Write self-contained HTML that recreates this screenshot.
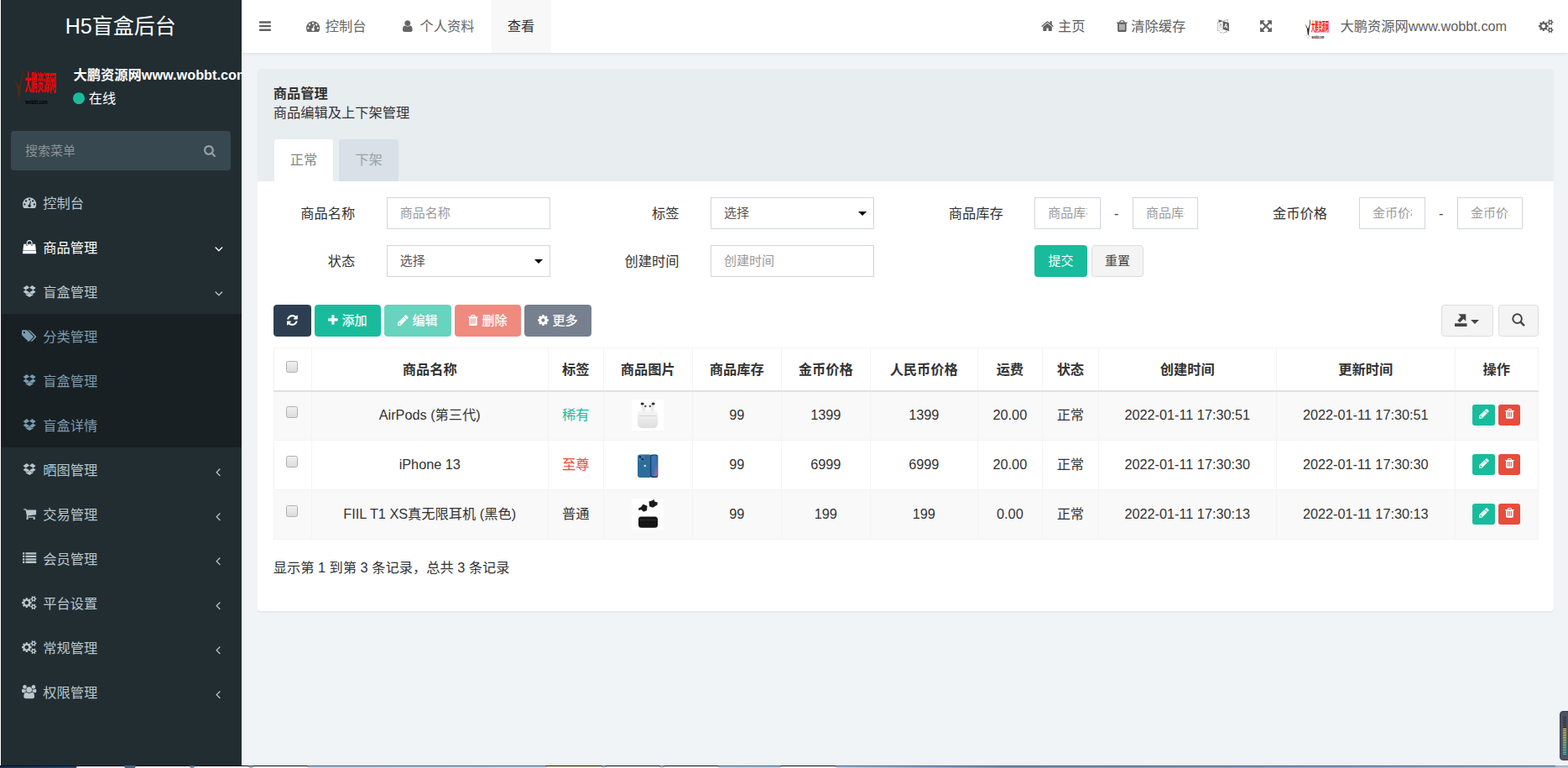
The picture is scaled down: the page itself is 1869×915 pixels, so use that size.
<!DOCTYPE html>
<html lang="zh-CN">
<head>
<meta charset="utf-8">
<title>H5盲盒后台</title>
<style>
*{box-sizing:border-box;}
html,body{margin:0;padding:0;width:1869px;height:915px;overflow:hidden;background:#f1f4f6;}
body{position:relative;font-family:"Liberation Sans","Noto Sans CJK SC",sans-serif;}
#app{position:absolute;left:0;top:0;width:1495.2px;height:732px;zoom:1.25;overflow:hidden;
  font-size:13px;line-height:1.42857;color:#333;background:#f1f4f6;}
.fa{display:inline-block;height:1em;vertical-align:-0.143em;fill:currentColor;overflow:visible;}
a{text-decoration:none;color:inherit;}
ul{list-style:none;margin:0;padding:0;}

/* sidebar */
.sidebar{position:absolute;left:0;top:0;width:230px;height:732px;background:#222d32;color:#b8c7ce;overflow:hidden;}
.logo{display:block;height:50px;line-height:50px;text-align:center;font-size:20px;color:#fff;font-weight:400;}
.user-panel{position:relative;height:65px;padding:10px;white-space:nowrap;}
.user-panel .avatar{position:absolute;left:10px;top:10px;width:45px;height:45px;}
.user-panel .info{position:absolute;left:55px;top:10px;padding:5px 5px 5px 15px;line-height:1;color:#fff;}
.user-panel .info p{margin:0 0 9px 0;font-weight:bold;font-size:13px;}
.user-panel .info .st{font-size:13px;display:block;}
.user-panel .info .st .fa{color:#18bc9c;margin-right:4.2px;margin-left:-0.7px;}
.sidebar-form{margin:10px 10px 9.7px 10px;height:37.4px;border-radius:3px;background:#374850;position:relative;}
.sidebar-form .ph{position:absolute;left:14px;top:0;line-height:38px;font-size:12px;color:#8b9398;}
.sidebar-form .fa{position:absolute;right:14.8px;top:12.2px;font-size:12px;color:#9a9fa3;}
.sidebar-menu>li{position:relative;}
.sidebar-menu li>a{display:block;height:42.4px;padding:12.4px 5px 11.6px 15px;line-height:18.4px;border-left:3px solid transparent;position:relative;white-space:nowrap;}
.sidebar-menu li>a .ico{display:inline-block;width:20px;text-align:center;position:relative;left:0.7px;top:-0.2px;}
.sidebar-menu li.active>a{color:#fff;}
.sidebar-menu .pr{position:absolute;right:19.8px;top:50%;margin-top:-6.7px;height:18px;line-height:18px;}
.sidebar-menu .pr.down .fa{transform:translate(0.3px,-0.1px) rotate(-90deg);}
.treeview-menu{background:#182024;}
.treeview-menu li>a{color:#7a9bae;}

/* header */
.navbar{position:absolute;left:230px;top:0;right:0;height:50px;background:#fff;box-shadow:0 1px 3px rgba(0,21,41,.1);color:#444;}
.navbar .toggle{position:absolute;left:0;top:0;height:50px;line-height:50px;padding:0 17px;color:#606060;}
.navtabs{position:absolute;left:44.8px;top:0;height:50px;display:flex;}
.navtabs li{height:50px;line-height:50.6px;padding:0 15px;margin-right:1px;color:#666;white-space:nowrap;}
.navtabs li.active{background:#f8f8f8;color:#333;}
.navtabs li .fw{display:inline-block;width:1.2857em;text-align:center;color:#666;}
.navtabs li.active{padding:0 15.4px;}
.navright{position:absolute;right:-0.6px;top:0;height:50px;display:flex;}
.navright li{height:50px;line-height:50.6px;padding:0 15px;color:#606060;white-space:nowrap;}
.navright li .av{display:inline-block;width:25px;height:25px;vertical-align:middle;margin-right:10px;margin-top:3.5px;}

/* content */
.content{position:absolute;left:230px;top:50px;right:0;bottom:0;padding:15.6px 0 0 15.6px;}
.panel{width:1236px;height:516.6px;background:#fff;border-radius:3px;box-shadow:0 1px 1px rgba(0,0,0,.05);}
.panel-heading{background:#e8edf0;padding:14.7px 15px 0 15px;border-radius:3px 3px 0 0;height:106.9px;}
.panel-lead{margin-bottom:15px;height:37.6px;line-height:18.4px;}
.panel-lead em{display:block;font-style:normal;font-weight:bold;}
.tabs{display:flex;height:39.7px;margin-left:1px;}
.tabs li{padding:10px 15px;margin-right:5.6px;border-radius:2.5px 2.5px 0 0;background:#d9e0e7;color:#95a5a6;height:39.7px;}
.tabs li+li{padding:10px 15.4px;}
.tabs li.active{background:#fff;color:#7b8a8b;}
.panel-body{padding:15.5px 15px 0 15px;}

/* search form */
.cs{margin:0 -15px;display:flex;flex-wrap:wrap;}
.cs .fg{width:25%;padding:0 15px;display:flex;margin-bottom:15.2px;height:30.4px;}
.cs label{width:33.3333%;padding:0 15px;text-align:right;line-height:31.4px;white-space:nowrap;}
.cs .ctl{width:66.6667%;padding:0 15px;position:relative;}
.fc{display:block;width:100%;height:30.4px;border:1px solid #d2d6de;background:#fff;font-size:12px;padding:0 12px;line-height:28.8px;color:#999;white-space:nowrap;}
.fc>span{display:block;overflow:hidden;}
.fc.sel{color:#555;position:relative;}
.fc.sel:after{content:"";position:absolute;right:6px;top:12.6px;border:4px solid transparent;border-top:4px solid #000;border-bottom:0;}
.range{display:flex;margin:0 -15px;position:relative;}
.range>div{width:50%;padding:0 15px;}
.range .dash{position:absolute;left:0;width:100%;text-align:center;line-height:31px;padding:0;color:#444;}
.btn{display:inline-block;height:30.4px;line-height:28.6px;padding:0 12px;font-size:12px;border:1px solid transparent;border-radius:3px;white-space:nowrap;vertical-align:top;}
.btn-success{background:#18bc9c;border-color:#18bc9c;color:#fff;}
.btn-default{background:#f4f4f4;border-color:#ddd;color:#444;}
.btn-primary{background:#2c3e50;border-color:#2c3e50;color:#fff;}
.btn-danger{background:#e74c3c;border-color:#e74c3c;color:#fff;}
.btn-secondary{background:#76808e;border-color:#76808e;color:#fff;}
.btn.dis{opacity:.65;}

/* toolbar */
.toolbar{position:relative;height:30.4px;margin-top:11.2px;margin-bottom:10.3px;}
.toolbar .l{position:absolute;left:0;top:0;display:flex;gap:3.4px;}
.toolbar .l .fa{margin-right:0.6px;}
.toolbar .l .btn-primary .fa{margin-right:0;}
.cs .btn{padding:0 12.3px;}
.toolbar .r{position:absolute;right:-0.6px;top:0;display:flex;gap:5.1px;}
.toolbar .r .btn{position:relative;padding:0;}
.toolbar .r .exp{width:49.2px;}
.toolbar .r .exp svg{position:absolute;left:11.7px;top:7.6px;width:11.6px;height:12.4px;fill:#444;}
.toolbar .r .exp i{position:absolute;left:27.2px;top:13.3px;border:4px solid transparent;border-top:4.2px solid #444;border-bottom:0;}
.toolbar .r .sr{width:38.2px;}
.toolbar .r .sr svg{position:absolute;left:11.9px;top:7.5px;width:12.6px;height:12.4px;fill:none;stroke:#444;}

/* table */
table{border-collapse:collapse;width:1205.6px;table-layout:fixed;}
th,td{border:1px solid #f4f4f4;text-align:center;vertical-align:middle;padding:0 8px;white-space:nowrap;overflow:hidden;}
th{height:41.2px;font-weight:bold;border-bottom:1.6px solid #e0e0e0;padding-top:1px;}
td{height:47.2px;padding-bottom:1.6px;}
tbody tr:nth-child(odd){background:#f9f9f9;}
.cb{display:inline-block;width:11px;height:11px;position:relative;top:-3.5px;left:-0.6px;border:1px solid #b0b0b0;border-radius:2px;background:linear-gradient(#f0f0f0,#dcdcdc);vertical-align:middle;}
.op{display:inline-block;height:20px;padding:0 6px;border-radius:2.4px;color:#fff;font-size:11px;line-height:19px;text-align:center;vertical-align:middle;margin:0 -0.05px;}
.pimg{display:inline-block;width:30.4px;height:29.6px;vertical-align:middle;position:relative;left:-0.3px;}
.tinfo{margin-top:9.2px;line-height:34px;}

/* desktop leftovers */
#edge{position:absolute;left:0;top:0;width:2px;height:912px;background:linear-gradient(90deg,#fff 0,#fff 1px,#1a2328 1px,#1a2328 2px);}
#taskbar{position:absolute;left:0;top:912px;width:1869px;height:3px;background:linear-gradient(90deg,#17305c 0,#1d4a78 91px,#b4d0f2 367px,#bcd6f6 650px,#a9c8ee 1000px,#6e95c6 1200px,#7fa4d2 1500px,#9dbce2 1854px,#b9c6d8 1855px);overflow:hidden;}
#taskbar:before{content:"";position:absolute;left:0;top:0;width:100%;height:1px;background:linear-gradient(90deg,#070d16 0,#070d16 91px,#46566a 91px,#46566a 1854px,#8ea3bf 1854px);}
#taskbar i{position:absolute;top:0;height:3px;background:#f6f8fc;border-radius:2px 2px 0 0;border-top:1px solid #0a0a0c;}
#tbline{position:absolute;left:288px;top:911px;width:1581px;height:1px;background:#fff;}
#widget{position:absolute;left:1859px;top:847px;width:14px;height:59px;border-radius:4px;background:#4d5361;border:1px solid #3b404c;}
#widget:before{content:"";position:absolute;left:3px;top:5px;width:4px;height:46px;background:linear-gradient(#2e3139 0,#2e3139 14px,#f0c040 14px,#e8c840 20px,#c8d850 26px,#80dc70 34px,#40d8a0 40px,#30d0c0 46px);}
#widget:after{content:"";position:absolute;left:3px;top:5px;width:4px;height:46px;background:repeating-linear-gradient(#4d5361 0,#4d5361 1px,transparent 1px,transparent 2px);}
.toolbar .l .btn{-webkit-text-stroke:0.2px currentColor;}
.range>div:last-child .fc{margin-left:0.45px;width:calc(100% - 0.45px);}
.cs .fg:nth-child(4) .range{left:0.5px;}

</style>
</head>
<body>
<div id="app">
  <div class="sidebar">
    <a class="logo">H5盲盒后台</a>
    <div class="user-panel">
      <svg class="avatar" viewBox="0 0 45 45"><path d="M9.6 5.8c1.6 1 2.4 2.6 2 4.6c-.2 2.6-1 5.6-1.6 8.6c-.3 2.6-.7 5.4-.9 8.200c-.2 2.600-.5 5.200-1.4 6.800c-.8-1.400-1-3.600-1.200-6c-.2-3.200-.8-6-1.800-8.600c-.8-2.200-1.800-4-2.800-5.600c1.600 1.200 2.800 2.800 3.800 4.800c.6 1.400 1.200 2.800 1.800 3.800c.8-2.200 1.600-4.600 2.200-7.200c.5-2.400.9-4.800.9-6.600c0-1.200-.4-2.200-1-2.800z M4.600 32.500l.8 1.200l-.8 1z M9.400 33.600l.8 1.400l-1 .8z M7 36l.8 1.400l-.9.6z" fill="#4f2a14"/><text transform="translate(13.1,26.3) scale(0.3,1.06)" font-size="20" font-weight="bold" fill="#ff0000">大鹏资源网</text><text transform="translate(13.8,39) scale(0.62,1)" font-size="6.5" font-weight="bold" fill="#000">wobbt.com</text></svg>
      <div class="info">
        <p>大鹏资源网www.wobbt.com</p>
        <span class="st"><svg class="fa " viewBox="0 0 1536 1792" style="width:0.8571em;"><path transform="translate(0,1536) scale(1,-1)" d="M1536 640q0 -209 -103 -385.5t-279.5 -279.5t-385.5 -103t-385.5 103t-279.5 279.5t-103 385.5t103 385.5t279.5 279.5t385.5 103t385.5 -103t279.5 -279.5t103 -385.5z"/></svg>在线</span>
      </div>
    </div>
    <div class="sidebar-form"><span class="ph">搜索菜单</span><svg class="fa " viewBox="0 0 1664 1792" style="width:0.9286em;"><path transform="translate(0,1536) scale(1,-1)" d="M1152 704q0 185 -131.5 316.5t-316.5 131.5t-316.5 -131.5t-131.5 -316.5t131.5 -316.5t316.5 -131.5t316.5 131.5t131.5 316.5zM1664 -128q0 -52 -38 -90t-90 -38q-54 0 -90 38l-343 342q-179 -124 -399 -124q-143 0 -273.5 55.5t-225 150t-150 225t-55.5 273.5
t55.5 273.5t150 225t225 150t273.5 55.5t273.5 -55.5t225 -150t150 -225t55.5 -273.5q0 -220 -124 -399l343 -343q37 -37 37 -90z"/></svg></div>
    <ul class="sidebar-menu">
      <li><a><span class="ico"><svg class="fa " viewBox="0 0 1792 1792" style="width:1.0000em;"><path transform="translate(0,1536) scale(1,-1)" d="M384 384q0 53 -37.5 90.5t-90.5 37.5t-90.5 -37.5t-37.5 -90.5t37.5 -90.5t90.5 -37.5t90.5 37.5t37.5 90.5zM576 832q0 53 -37.5 90.5t-90.5 37.5t-90.5 -37.5t-37.5 -90.5t37.5 -90.5t90.5 -37.5t90.5 37.5t37.5 90.5zM1004 351l101 382q6 26 -7.5 48.5t-38.5 29.5
t-48 -6.5t-30 -39.5l-101 -382q-60 -5 -107 -43.5t-63 -98.5q-20 -77 20 -146t117 -89t146 20t89 117q16 60 -6 117t-72 91zM1664 384q0 53 -37.5 90.5t-90.5 37.5t-90.5 -37.5t-37.5 -90.5t37.5 -90.5t90.5 -37.5t90.5 37.5t37.5 90.5zM1024 1024q0 53 -37.5 90.5
t-90.5 37.5t-90.5 -37.5t-37.5 -90.5t37.5 -90.5t90.5 -37.5t90.5 37.5t37.5 90.5zM1472 832q0 53 -37.5 90.5t-90.5 37.5t-90.5 -37.5t-37.5 -90.5t37.5 -90.5t90.5 -37.5t90.5 37.5t37.5 90.5zM1792 384q0 -261 -141 -483q-19 -29 -54 -29h-1402q-35 0 -54 29
q-141 221 -141 483q0 182 71 348t191 286t286 191t348 71t348 -71t286 -191t191 -286t71 -348z"/></svg></span> <span>控制台</span></a></li>
      <li class="active"><a><span class="ico"><svg class="fa " viewBox="0 0 1792 1792" style="width:1.0000em;"><path transform="translate(0,1536) scale(1,-1)" d="M1757 128l35 -313q3 -28 -16 -50q-19 -21 -48 -21h-1664q-29 0 -48 21q-19 22 -16 50l35 313h1722zM1664 967l86 -775h-1708l86 775q3 24 21 40.5t43 16.5h256v-128q0 -53 37.5 -90.5t90.5 -37.5t90.5 37.5t37.5 90.5v128h384v-128q0 -53 37.5 -90.5t90.5 -37.5
t90.5 37.5t37.5 90.5v128h256q25 0 43 -16.5t21 -40.5zM1280 1152v-256q0 -26 -19 -45t-45 -19t-45 19t-19 45v256q0 106 -75 181t-181 75t-181 -75t-75 -181v-256q0 -26 -19 -45t-45 -19t-45 19t-19 45v256q0 159 112.5 271.5t271.5 112.5t271.5 -112.5t112.5 -271.5z"/></svg></span> <span>商品管理</span><span class="pr down"><svg class="fa " viewBox="0 0 640 1792" style="width:0.3571em;"><path transform="translate(0,1536) scale(1,-1)" d="M627 992q0 -13 -10 -23l-393 -393l393 -393q10 -10 10 -23t-10 -23l-50 -50q-10 -10 -23 -10t-23 10l-466 466q-10 10 -10 23t10 23l466 466q10 10 23 10t23 -10l50 -50q10 -10 10 -23z"/></svg></span></a></li>
      <li class="open"><a><span class="ico"><svg class="fa " viewBox="0 0 1792 1792" style="width:1.0000em;"><path transform="translate(0,1536) scale(1,-1)" d="M402 829l494 -305l-342 -285l-490 319zM1388 274v-108l-490 -293v-1l-1 1l-1 -1v1l-489 293v108l147 -96l342 284v2l1 -1l1 1v-2l343 -284zM554 1418l342 -285l-494 -304l-338 270zM1390 829l338 -271l-489 -319l-343 285zM1239 1418l489 -319l-338 -270l-494 304z"/></svg></span> <span>盲盒管理</span><span class="pr down"><svg class="fa " viewBox="0 0 640 1792" style="width:0.3571em;"><path transform="translate(0,1536) scale(1,-1)" d="M627 992q0 -13 -10 -23l-393 -393l393 -393q10 -10 10 -23t-10 -23l-50 -50q-10 -10 -23 -10t-23 10l-466 466q-10 10 -10 23t10 23l466 466q10 10 23 10t23 -10l50 -50q10 -10 10 -23z"/></svg></span></a>
        <ul class="treeview-menu">
          <li><a><span class="ico"><svg class="fa " viewBox="0 0 1920 1792" style="width:1.0714em;"><path transform="translate(0,1536) scale(1,-1)" d="M448 1088q0 53 -37.5 90.5t-90.5 37.5t-90.5 -37.5t-37.5 -90.5t37.5 -90.5t90.5 -37.5t90.5 37.5t37.5 90.5zM1515 512q0 -53 -37 -90l-491 -492q-39 -37 -91 -37q-53 0 -90 37l-715 716q-38 37 -64.5 101t-26.5 117v416q0 52 38 90t90 38h416q53 0 117 -26.5t102 -64.5
l715 -714q37 -39 37 -91zM1899 512q0 -53 -37 -90l-491 -492q-39 -37 -91 -37q-36 0 -59 14t-53 45l470 470q37 37 37 90q0 52 -37 91l-715 714q-38 38 -102 64.5t-117 26.5h224q53 0 117 -26.5t102 -64.5l715 -714q37 -39 37 -91z"/></svg></span> <span>分类管理</span></a></li>
          <li><a><span class="ico"><svg class="fa " viewBox="0 0 1792 1792" style="width:1.0000em;"><path transform="translate(0,1536) scale(1,-1)" d="M402 829l494 -305l-342 -285l-490 319zM1388 274v-108l-490 -293v-1l-1 1l-1 -1v1l-489 293v108l147 -96l342 284v2l1 -1l1 1v-2l343 -284zM554 1418l342 -285l-494 -304l-338 270zM1390 829l338 -271l-489 -319l-343 285zM1239 1418l489 -319l-338 -270l-494 304z"/></svg></span> <span>盲盒管理</span></a></li>
          <li><a><span class="ico"><svg class="fa " viewBox="0 0 1792 1792" style="width:1.0000em;"><path transform="translate(0,1536) scale(1,-1)" d="M402 829l494 -305l-342 -285l-490 319zM1388 274v-108l-490 -293v-1l-1 1l-1 -1v1l-489 293v108l147 -96l342 284v2l1 -1l1 1v-2l343 -284zM554 1418l342 -285l-494 -304l-338 270zM1390 829l338 -271l-489 -319l-343 285zM1239 1418l489 -319l-338 -270l-494 304z"/></svg></span> <span>盲盒详情</span></a></li>
        </ul>
      </li>
      <li><a><span class="ico"><svg class="fa " viewBox="0 0 1792 1792" style="width:1.0000em;"><path transform="translate(0,1536) scale(1,-1)" d="M402 829l494 -305l-342 -285l-490 319zM1388 274v-108l-490 -293v-1l-1 1l-1 -1v1l-489 293v108l147 -96l342 284v2l1 -1l1 1v-2l343 -284zM554 1418l342 -285l-494 -304l-338 270zM1390 829l338 -271l-489 -319l-343 285zM1239 1418l489 -319l-338 -270l-494 304z"/></svg></span> <span>晒图管理</span><span class="pr"><svg class="fa " viewBox="0 0 640 1792" style="width:0.3571em;"><path transform="translate(0,1536) scale(1,-1)" d="M627 992q0 -13 -10 -23l-393 -393l393 -393q10 -10 10 -23t-10 -23l-50 -50q-10 -10 -23 -10t-23 10l-466 466q-10 10 -10 23t10 23l466 466q10 10 23 10t23 -10l50 -50q10 -10 10 -23z"/></svg></span></a></li>
      <li><a><span class="ico"><svg class="fa " viewBox="0 0 1664 1792" style="width:0.9286em;"><path transform="translate(0,1536) scale(1,-1)" d="M640 0q0 -52 -38 -90t-90 -38t-90 38t-38 90t38 90t90 38t90 -38t38 -90zM1536 0q0 -52 -38 -90t-90 -38t-90 38t-38 90t38 90t90 38t90 -38t38 -90zM1664 1088v-512q0 -24 -16.5 -42.5t-40.5 -21.5l-1044 -122q13 -60 13 -70q0 -16 -24 -64h920q26 0 45 -19t19 -45
t-19 -45t-45 -19h-1024q-26 0 -45 19t-19 45q0 11 8 31.5t16 36t21.5 40t15.5 29.5l-177 823h-204q-26 0 -45 19t-19 45t19 45t45 19h256q16 0 28.5 -6.5t19.5 -15.5t13 -24.5t8 -26t5.5 -29.5t4.5 -26h1201q26 0 45 -19t19 -45z"/></svg></span> <span>交易管理</span><span class="pr"><svg class="fa " viewBox="0 0 640 1792" style="width:0.3571em;"><path transform="translate(0,1536) scale(1,-1)" d="M627 992q0 -13 -10 -23l-393 -393l393 -393q10 -10 10 -23t-10 -23l-50 -50q-10 -10 -23 -10t-23 10l-466 466q-10 10 -10 23t10 23l466 466q10 10 23 10t23 -10l50 -50q10 -10 10 -23z"/></svg></span></a></li>
      <li><a><span class="ico"><svg class="fa " viewBox="0 0 1792 1792" style="width:1.0000em;"><path transform="translate(0,1536) scale(1,-1)" d="M256 224v-192q0 -13 -9.5 -22.5t-22.5 -9.5h-192q-13 0 -22.5 9.5t-9.5 22.5v192q0 13 9.5 22.5t22.5 9.5h192q13 0 22.5 -9.5t9.5 -22.5zM256 608v-192q0 -13 -9.5 -22.5t-22.5 -9.5h-192q-13 0 -22.5 9.5t-9.5 22.5v192q0 13 9.5 22.5t22.5 9.5h192q13 0 22.5 -9.5
t9.5 -22.5zM256 992v-192q0 -13 -9.5 -22.5t-22.5 -9.5h-192q-13 0 -22.5 9.5t-9.5 22.5v192q0 13 9.5 22.5t22.5 9.5h192q13 0 22.5 -9.5t9.5 -22.5zM1792 224v-192q0 -13 -9.5 -22.5t-22.5 -9.5h-1344q-13 0 -22.5 9.5t-9.5 22.5v192q0 13 9.5 22.5t22.5 9.5h1344
q13 0 22.5 -9.5t9.5 -22.5zM256 1376v-192q0 -13 -9.5 -22.5t-22.5 -9.5h-192q-13 0 -22.5 9.5t-9.5 22.5v192q0 13 9.5 22.5t22.5 9.5h192q13 0 22.5 -9.5t9.5 -22.5zM1792 608v-192q0 -13 -9.5 -22.5t-22.5 -9.5h-1344q-13 0 -22.5 9.5t-9.5 22.5v192q0 13 9.5 22.5
t22.5 9.5h1344q13 0 22.5 -9.5t9.5 -22.5zM1792 992v-192q0 -13 -9.5 -22.5t-22.5 -9.5h-1344q-13 0 -22.5 9.5t-9.5 22.5v192q0 13 9.5 22.5t22.5 9.5h1344q13 0 22.5 -9.5t9.5 -22.5zM1792 1376v-192q0 -13 -9.5 -22.5t-22.5 -9.5h-1344q-13 0 -22.5 9.5t-9.5 22.5v192
q0 13 9.5 22.5t22.5 9.5h1344q13 0 22.5 -9.5t9.5 -22.5z"/></svg></span> <span>会员管理</span><span class="pr"><svg class="fa " viewBox="0 0 640 1792" style="width:0.3571em;"><path transform="translate(0,1536) scale(1,-1)" d="M627 992q0 -13 -10 -23l-393 -393l393 -393q10 -10 10 -23t-10 -23l-50 -50q-10 -10 -23 -10t-23 10l-466 466q-10 10 -10 23t10 23l466 466q10 10 23 10t23 -10l50 -50q10 -10 10 -23z"/></svg></span></a></li>
      <li><a><span class="ico"><svg class="fa " viewBox="0 0 1920 1792" style="width:1.0714em;"><path transform="translate(0,1536) scale(1,-1)" d="M896 640q0 106 -75 181t-181 75t-181 -75t-75 -181t75 -181t181 -75t181 75t75 181zM1664 128q0 52 -38 90t-90 38t-90 -38t-38 -90q0 -53 37.5 -90.5t90.5 -37.5t90.5 37.5t37.5 90.5zM1664 1152q0 52 -38 90t-90 38t-90 -38t-38 -90q0 -53 37.5 -90.5t90.5 -37.5
t90.5 37.5t37.5 90.5zM1280 731v-185q0 -10 -7 -19.5t-16 -10.5l-155 -24q-11 -35 -32 -76q34 -48 90 -115q7 -11 7 -20q0 -12 -7 -19q-23 -30 -82.5 -89.5t-78.5 -59.5q-11 0 -21 7l-115 90q-37 -19 -77 -31q-11 -108 -23 -155q-7 -24 -30 -24h-186q-11 0 -20 7.5t-10 17.5
l-23 153q-34 10 -75 31l-118 -89q-7 -7 -20 -7q-11 0 -21 8q-144 133 -144 160q0 9 7 19q10 14 41 53t47 61q-23 44 -35 82l-152 24q-10 1 -17 9.5t-7 19.5v185q0 10 7 19.5t16 10.5l155 24q11 35 32 76q-34 48 -90 115q-7 11 -7 20q0 12 7 20q22 30 82 89t79 59q11 0 21 -7
l115 -90q34 18 77 32q11 108 23 154q7 24 30 24h186q11 0 20 -7.5t10 -17.5l23 -153q34 -10 75 -31l118 89q8 7 20 7q11 0 21 -8q144 -133 144 -160q0 -8 -7 -19q-12 -16 -42 -54t-45 -60q23 -48 34 -82l152 -23q10 -2 17 -10.5t7 -19.5zM1920 198v-140q0 -16 -149 -31
q-12 -27 -30 -52q51 -113 51 -138q0 -4 -4 -7q-122 -71 -124 -71q-8 0 -46 47t-52 68q-20 -2 -30 -2t-30 2q-14 -21 -52 -68t-46 -47q-2 0 -124 71q-4 3 -4 7q0 25 51 138q-18 25 -30 52q-149 15 -149 31v140q0 16 149 31q13 29 30 52q-51 113 -51 138q0 4 4 7q4 2 35 20
t59 34t30 16q8 0 46 -46.5t52 -67.5q20 2 30 2t30 -2q51 71 92 112l6 2q4 0 124 -70q4 -3 4 -7q0 -25 -51 -138q17 -23 30 -52q149 -15 149 -31zM1920 1222v-140q0 -16 -149 -31q-12 -27 -30 -52q51 -113 51 -138q0 -4 -4 -7q-122 -71 -124 -71q-8 0 -46 47t-52 68
q-20 -2 -30 -2t-30 2q-14 -21 -52 -68t-46 -47q-2 0 -124 71q-4 3 -4 7q0 25 51 138q-18 25 -30 52q-149 15 -149 31v140q0 16 149 31q13 29 30 52q-51 113 -51 138q0 4 4 7q4 2 35 20t59 34t30 16q8 0 46 -46.5t52 -67.5q20 2 30 2t30 -2q51 71 92 112l6 2q4 0 124 -70
q4 -3 4 -7q0 -25 -51 -138q17 -23 30 -52q149 -15 149 -31z"/></svg></span> <span>平台设置</span><span class="pr"><svg class="fa " viewBox="0 0 640 1792" style="width:0.3571em;"><path transform="translate(0,1536) scale(1,-1)" d="M627 992q0 -13 -10 -23l-393 -393l393 -393q10 -10 10 -23t-10 -23l-50 -50q-10 -10 -23 -10t-23 10l-466 466q-10 10 -10 23t10 23l466 466q10 10 23 10t23 -10l50 -50q10 -10 10 -23z"/></svg></span></a></li>
      <li><a><span class="ico"><svg class="fa " viewBox="0 0 1920 1792" style="width:1.0714em;"><path transform="translate(0,1536) scale(1,-1)" d="M896 640q0 106 -75 181t-181 75t-181 -75t-75 -181t75 -181t181 -75t181 75t75 181zM1664 128q0 52 -38 90t-90 38t-90 -38t-38 -90q0 -53 37.5 -90.5t90.5 -37.5t90.5 37.5t37.5 90.5zM1664 1152q0 52 -38 90t-90 38t-90 -38t-38 -90q0 -53 37.5 -90.5t90.5 -37.5
t90.5 37.5t37.5 90.5zM1280 731v-185q0 -10 -7 -19.5t-16 -10.5l-155 -24q-11 -35 -32 -76q34 -48 90 -115q7 -11 7 -20q0 -12 -7 -19q-23 -30 -82.5 -89.5t-78.5 -59.5q-11 0 -21 7l-115 90q-37 -19 -77 -31q-11 -108 -23 -155q-7 -24 -30 -24h-186q-11 0 -20 7.5t-10 17.5
l-23 153q-34 10 -75 31l-118 -89q-7 -7 -20 -7q-11 0 -21 8q-144 133 -144 160q0 9 7 19q10 14 41 53t47 61q-23 44 -35 82l-152 24q-10 1 -17 9.5t-7 19.5v185q0 10 7 19.5t16 10.5l155 24q11 35 32 76q-34 48 -90 115q-7 11 -7 20q0 12 7 20q22 30 82 89t79 59q11 0 21 -7
l115 -90q34 18 77 32q11 108 23 154q7 24 30 24h186q11 0 20 -7.5t10 -17.5l23 -153q34 -10 75 -31l118 89q8 7 20 7q11 0 21 -8q144 -133 144 -160q0 -8 -7 -19q-12 -16 -42 -54t-45 -60q23 -48 34 -82l152 -23q10 -2 17 -10.5t7 -19.5zM1920 198v-140q0 -16 -149 -31
q-12 -27 -30 -52q51 -113 51 -138q0 -4 -4 -7q-122 -71 -124 -71q-8 0 -46 47t-52 68q-20 -2 -30 -2t-30 2q-14 -21 -52 -68t-46 -47q-2 0 -124 71q-4 3 -4 7q0 25 51 138q-18 25 -30 52q-149 15 -149 31v140q0 16 149 31q13 29 30 52q-51 113 -51 138q0 4 4 7q4 2 35 20
t59 34t30 16q8 0 46 -46.5t52 -67.5q20 2 30 2t30 -2q51 71 92 112l6 2q4 0 124 -70q4 -3 4 -7q0 -25 -51 -138q17 -23 30 -52q149 -15 149 -31zM1920 1222v-140q0 -16 -149 -31q-12 -27 -30 -52q51 -113 51 -138q0 -4 -4 -7q-122 -71 -124 -71q-8 0 -46 47t-52 68
q-20 -2 -30 -2t-30 2q-14 -21 -52 -68t-46 -47q-2 0 -124 71q-4 3 -4 7q0 25 51 138q-18 25 -30 52q-149 15 -149 31v140q0 16 149 31q13 29 30 52q-51 113 -51 138q0 4 4 7q4 2 35 20t59 34t30 16q8 0 46 -46.5t52 -67.5q20 2 30 2t30 -2q51 71 92 112l6 2q4 0 124 -70
q4 -3 4 -7q0 -25 -51 -138q17 -23 30 -52q149 -15 149 -31z"/></svg></span> <span>常规管理</span><span class="pr"><svg class="fa " viewBox="0 0 640 1792" style="width:0.3571em;"><path transform="translate(0,1536) scale(1,-1)" d="M627 992q0 -13 -10 -23l-393 -393l393 -393q10 -10 10 -23t-10 -23l-50 -50q-10 -10 -23 -10t-23 10l-466 466q-10 10 -10 23t10 23l466 466q10 10 23 10t23 -10l50 -50q10 -10 10 -23z"/></svg></span></a></li>
      <li><a><span class="ico"><svg class="fa " viewBox="0 0 1920 1792" style="width:1.0714em;"><path transform="translate(0,1536) scale(1,-1)" d="M593 640q-162 -5 -265 -128h-134q-82 0 -138 40.5t-56 118.5q0 353 124 353q6 0 43.5 -21t97.5 -42.5t119 -21.5q67 0 133 23q-5 -37 -5 -66q0 -139 81 -256zM1664 3q0 -120 -73 -189.5t-194 -69.5h-874q-121 0 -194 69.5t-73 189.5q0 53 3.5 103.5t14 109t26.5 108.5
t43 97.5t62 81t85.5 53.5t111.5 20q10 0 43 -21.5t73 -48t107 -48t135 -21.5t135 21.5t107 48t73 48t43 21.5q61 0 111.5 -20t85.5 -53.5t62 -81t43 -97.5t26.5 -108.5t14 -109t3.5 -103.5zM640 1280q0 -106 -75 -181t-181 -75t-181 75t-75 181t75 181t181 75t181 -75
t75 -181zM1344 896q0 -159 -112.5 -271.5t-271.5 -112.5t-271.5 112.5t-112.5 271.5t112.5 271.5t271.5 112.5t271.5 -112.5t112.5 -271.5zM1920 671q0 -78 -56 -118.5t-138 -40.5h-134q-103 123 -265 128q81 117 81 256q0 29 -5 66q66 -23 133 -23q59 0 119 21.5t97.5 42.5
t43.5 21q124 0 124 -353zM1792 1280q0 -106 -75 -181t-181 -75t-181 75t-75 181t75 181t181 75t181 -75t75 -181z"/></svg></span> <span>权限管理</span><span class="pr"><svg class="fa " viewBox="0 0 640 1792" style="width:0.3571em;"><path transform="translate(0,1536) scale(1,-1)" d="M627 992q0 -13 -10 -23l-393 -393l393 -393q10 -10 10 -23t-10 -23l-50 -50q-10 -10 -23 -10t-23 10l-466 466q-10 10 -10 23t10 23l466 466q10 10 23 10t23 -10l50 -50q10 -10 10 -23z"/></svg></span></a></li>
    </ul>
  </div>

  <div class="navbar">
    <a class="toggle"><svg class="fa " viewBox="0 0 1536 1792" style="width:0.8571em;"><path transform="translate(0,1536) scale(1,-1)" d="M1536 192v-128q0 -26 -19 -45t-45 -19h-1408q-26 0 -45 19t-19 45v128q0 26 19 45t45 19h1408q26 0 45 -19t19 -45zM1536 704v-128q0 -26 -19 -45t-45 -19h-1408q-26 0 -45 19t-19 45v128q0 26 19 45t45 19h1408q26 0 45 -19t19 -45zM1536 1216v-128q0 -26 -19 -45
t-45 -19h-1408q-26 0 -45 19t-19 45v128q0 26 19 45t45 19h1408q26 0 45 -19t19 -45z"/></svg></a>
    <ul class="navtabs">
      <li><span class="fw"><svg class="fa " viewBox="0 0 1792 1792" style="width:1.0000em;"><path transform="translate(0,1536) scale(1,-1)" d="M384 384q0 53 -37.5 90.5t-90.5 37.5t-90.5 -37.5t-37.5 -90.5t37.5 -90.5t90.5 -37.5t90.5 37.5t37.5 90.5zM576 832q0 53 -37.5 90.5t-90.5 37.5t-90.5 -37.5t-37.5 -90.5t37.5 -90.5t90.5 -37.5t90.5 37.5t37.5 90.5zM1004 351l101 382q6 26 -7.5 48.5t-38.5 29.5
t-48 -6.5t-30 -39.5l-101 -382q-60 -5 -107 -43.5t-63 -98.5q-20 -77 20 -146t117 -89t146 20t89 117q16 60 -6 117t-72 91zM1664 384q0 53 -37.5 90.5t-90.5 37.5t-90.5 -37.5t-37.5 -90.5t37.5 -90.5t90.5 -37.5t90.5 37.5t37.5 90.5zM1024 1024q0 53 -37.5 90.5
t-90.5 37.5t-90.5 -37.5t-37.5 -90.5t37.5 -90.5t90.5 -37.5t90.5 37.5t37.5 90.5zM1472 832q0 53 -37.5 90.5t-90.5 37.5t-90.5 -37.5t-37.5 -90.5t37.5 -90.5t90.5 -37.5t90.5 37.5t37.5 90.5zM1792 384q0 -261 -141 -483q-19 -29 -54 -29h-1402q-35 0 -54 29
q-141 221 -141 483q0 182 71 348t191 286t286 191t348 71t348 -71t286 -191t191 -286t71 -348z"/></svg></span> <span>控制台</span></li>
      <li><span class="fw"><svg class="fa " viewBox="0 0 1280 1792" style="width:0.7143em;"><path transform="translate(0,1536) scale(1,-1)" d="M1280 137q0 -109 -62.5 -187t-150.5 -78h-854q-88 0 -150.5 78t-62.5 187q0 85 8.5 160.5t31.5 152t58.5 131t94 89t134.5 34.5q131 -128 313 -128t313 128q76 0 134.5 -34.5t94 -89t58.5 -131t31.5 -152t8.5 -160.5zM1024 1024q0 -159 -112.5 -271.5t-271.5 -112.5
t-271.5 112.5t-112.5 271.5t112.5 271.5t271.5 112.5t271.5 -112.5t112.5 -271.5z"/></svg></span> <span>个人资料</span></li>
      <li class="active"><span>查看</span></li>
    </ul>
    <ul class="navright">
      <li><svg class="fa " viewBox="0 0 1664 1792" style="width:0.9286em;"><path transform="translate(0,1536) scale(1,-1)" d="M1408 544v-480q0 -26 -19 -45t-45 -19h-384v384h-256v-384h-384q-26 0 -45 19t-19 45v480q0 1 0.5 3t0.5 3l575 474l575 -474q1 -2 1 -6zM1631 613l-62 -74q-8 -9 -21 -11h-3q-13 0 -21 7l-692 577l-692 -577q-12 -8 -24 -7q-13 2 -21 11l-62 74q-8 10 -7 23.5t11 21.5
l719 599q32 26 76 26t76 -26l244 -204v195q0 14 9 23t23 9h192q14 0 23 -9t9 -23v-408l219 -182q10 -8 11 -21.5t-7 -23.5z"/></svg> 主页</li>
      <li><svg class="fa " viewBox="0 0 1408 1792" style="width:0.7857em;"><path transform="translate(0,1536) scale(1,-1)" d="M512 160v704q0 14 -9 23t-23 9h-64q-14 0 -23 -9t-9 -23v-704q0 -14 9 -23t23 -9h64q14 0 23 9t9 23zM768 160v704q0 14 -9 23t-23 9h-64q-14 0 -23 -9t-9 -23v-704q0 -14 9 -23t23 -9h64q14 0 23 9t9 23zM1024 160v704q0 14 -9 23t-23 9h-64q-14 0 -23 -9t-9 -23v-704
q0 -14 9 -23t23 -9h64q14 0 23 9t9 23zM480 1152h448l-48 117q-7 9 -17 11h-317q-10 -2 -17 -11zM1408 1120v-64q0 -14 -9 -23t-23 -9h-96v-948q0 -83 -47 -143.5t-113 -60.5h-832q-66 0 -113 58.5t-47 141.5v952h-96q-14 0 -23 9t-9 23v64q0 14 9 23t23 9h309l70 167
q15 37 54 63t79 26h320q40 0 79 -26t54 -63l70 -167h309q14 0 23 -9t9 -23z"/></svg> 清除缓存</li>
      <li><svg class="fa " viewBox="0 0 1536 1792" style="width:0.8571em;"><path transform="translate(0,1536) scale(1,-1)" d="M654 458q-1 -3 -12.5 0.5t-31.5 11.5l-20 9q-44 20 -87 49q-7 5 -41 31.5t-38 28.5q-67 -103 -134 -181q-81 -95 -105 -110q-4 -2 -19.5 -4t-18.5 0q6 4 82 92q21 24 85.5 115t78.5 118q17 30 51 98.5t36 77.5q-8 1 -110 -33q-8 -2 -27.5 -7.5t-34.5 -9.5t-17 -5
q-2 -2 -2 -10.5t-1 -9.5q-5 -10 -31 -15q-23 -7 -47 0q-18 4 -28 21q-4 6 -5 23q6 2 24.5 5t29.5 6q58 16 105 32q100 35 102 35q10 2 43 19.5t44 21.5q9 3 21.5 8t14.5 5.5t6 -0.5q2 -12 -1 -33q0 -2 -12.5 -27t-26.5 -53.5t-17 -33.5q-25 -50 -77 -131l64 -28
q12 -6 74.5 -32t67.5 -28q4 -1 10.5 -25.5t4.5 -30.5zM449 944q3 -15 -4 -28q-12 -23 -50 -38q-30 -12 -60 -12q-26 3 -49 26q-14 15 -18 41l1 3q3 -3 19.5 -5t26.5 0t58 16q36 12 55 14q17 0 21 -17zM1147 815l63 -227l-139 42zM39 15l694 232v1032l-694 -233v-1031z
M1280 332l102 -31l-181 657l-100 31l-216 -536l102 -31l45 110l211 -65zM777 1294l573 -184v380zM1088 -29l158 -13l-54 -160l-40 66q-130 -83 -276 -108q-58 -12 -91 -12h-84q-79 0 -199.5 39t-183.5 85q-8 7 -8 16q0 8 5 13.5t13 5.5q4 0 18 -7.5t30.5 -16.5t20.5 -11
q73 -37 159.5 -61.5t157.5 -24.5q95 0 167 14.5t157 50.5q15 7 30.5 15.5t34 19t28.5 16.5zM1536 1050v-1079l-774 246q-14 -6 -375 -127.5t-368 -121.5q-13 0 -18 13q0 1 -1 3v1078q3 9 4 10q5 6 20 11q107 36 149 50v384l558 -198q2 0 160.5 55t316 108.5t161.5 53.5
q20 0 20 -21v-418z"/></svg></li>
      <li><svg class="fa " viewBox="0 0 1536 1792" style="width:0.8571em;"><path transform="translate(0,1536) scale(1,-1)" d="M1283 995l-355 -355l355 -355l144 144q29 31 70 14q39 -17 39 -59v-448q0 -26 -19 -45t-45 -19h-448q-42 0 -59 40q-17 39 14 69l144 144l-355 355l-355 -355l144 -144q31 -30 14 -69q-17 -40 -59 -40h-448q-26 0 -45 19t-19 45v448q0 42 40 59q39 17 69 -14l144 -144
l355 355l-355 355l-144 -144q-19 -19 -45 -19q-12 0 -24 5q-40 17 -40 59v448q0 26 19 45t45 19h448q42 0 59 -40q17 -39 -14 -69l-144 -144l355 -355l355 355l-144 144q-31 30 -14 69q17 40 59 40h448q26 0 45 -19t19 -45v-448q0 -42 -39 -59q-13 -5 -25 -5q-26 0 -45 19z
"/></svg></li>
      <li><svg class="av" viewBox="0 0 45 45"><rect width="45" height="45" fill="#fff"/><path d="M9.6 5.8c1.6 1 2.4 2.6 2 4.6c-.2 2.6-1 5.6-1.6 8.6c-.3 2.6-.7 5.4-.9 8.200c-.2 2.600-.5 5.200-1.4 6.800c-.8-1.400-1-3.600-1.200-6c-.2-3.200-.8-6-1.800-8.600c-.8-2.200-1.800-4-2.800-5.600c1.600 1.200 2.800 2.800 3.800 4.800c.6 1.400 1.200 2.800 1.800 3.800c.8-2.200 1.600-4.600 2.200-7.200c.5-2.400.9-4.800.9-6.600c0-1.200-.4-2.200-1-2.800z M4.600 32.500l.8 1.200l-.8 1z M9.400 33.600l.8 1.400l-1 .8z M7 36l.8 1.400l-.9.6z" fill="#2a1a10"/><text transform="translate(13.1,26.3) scale(0.3,1.06)" font-size="20" font-weight="bold" fill="#ff0000">大鹏资源网</text><text transform="translate(13.8,39) scale(0.62,1)" font-size="6.5" font-weight="bold" fill="#000">wobbt.com</text></svg><span>大鹏资源网www.wobbt.com</span></li>
      <li><svg class="fa " viewBox="0 0 1920 1792" style="width:1.0714em;"><path transform="translate(0,1536) scale(1,-1)" d="M896 640q0 106 -75 181t-181 75t-181 -75t-75 -181t75 -181t181 -75t181 75t75 181zM1664 128q0 52 -38 90t-90 38t-90 -38t-38 -90q0 -53 37.5 -90.5t90.5 -37.5t90.5 37.5t37.5 90.5zM1664 1152q0 52 -38 90t-90 38t-90 -38t-38 -90q0 -53 37.5 -90.5t90.5 -37.5
t90.5 37.5t37.5 90.5zM1280 731v-185q0 -10 -7 -19.5t-16 -10.5l-155 -24q-11 -35 -32 -76q34 -48 90 -115q7 -11 7 -20q0 -12 -7 -19q-23 -30 -82.5 -89.5t-78.5 -59.5q-11 0 -21 7l-115 90q-37 -19 -77 -31q-11 -108 -23 -155q-7 -24 -30 -24h-186q-11 0 -20 7.5t-10 17.5
l-23 153q-34 10 -75 31l-118 -89q-7 -7 -20 -7q-11 0 -21 8q-144 133 -144 160q0 9 7 19q10 14 41 53t47 61q-23 44 -35 82l-152 24q-10 1 -17 9.5t-7 19.5v185q0 10 7 19.5t16 10.5l155 24q11 35 32 76q-34 48 -90 115q-7 11 -7 20q0 12 7 20q22 30 82 89t79 59q11 0 21 -7
l115 -90q34 18 77 32q11 108 23 154q7 24 30 24h186q11 0 20 -7.5t10 -17.5l23 -153q34 -10 75 -31l118 89q8 7 20 7q11 0 21 -8q144 -133 144 -160q0 -8 -7 -19q-12 -16 -42 -54t-45 -60q23 -48 34 -82l152 -23q10 -2 17 -10.5t7 -19.5zM1920 198v-140q0 -16 -149 -31
q-12 -27 -30 -52q51 -113 51 -138q0 -4 -4 -7q-122 -71 -124 -71q-8 0 -46 47t-52 68q-20 -2 -30 -2t-30 2q-14 -21 -52 -68t-46 -47q-2 0 -124 71q-4 3 -4 7q0 25 51 138q-18 25 -30 52q-149 15 -149 31v140q0 16 149 31q13 29 30 52q-51 113 -51 138q0 4 4 7q4 2 35 20
t59 34t30 16q8 0 46 -46.5t52 -67.5q20 2 30 2t30 -2q51 71 92 112l6 2q4 0 124 -70q4 -3 4 -7q0 -25 -51 -138q17 -23 30 -52q149 -15 149 -31zM1920 1222v-140q0 -16 -149 -31q-12 -27 -30 -52q51 -113 51 -138q0 -4 -4 -7q-122 -71 -124 -71q-8 0 -46 47t-52 68
q-20 -2 -30 -2t-30 2q-14 -21 -52 -68t-46 -47q-2 0 -124 71q-4 3 -4 7q0 25 51 138q-18 25 -30 52q-149 15 -149 31v140q0 16 149 31q13 29 30 52q-51 113 -51 138q0 4 4 7q4 2 35 20t59 34t30 16q8 0 46 -46.5t52 -67.5q20 2 30 2t30 -2q51 71 92 112l6 2q4 0 124 -70
q4 -3 4 -7q0 -25 -51 -138q17 -23 30 -52q149 -15 149 -31z"/></svg></li>
    </ul>
  </div>

  <div class="content">
    <div class="panel">
      <div class="panel-heading">
        <div class="panel-lead"><em>商品管理</em>商品编辑及上下架管理</div>
        <ul class="tabs">
          <li class="active">正常</li>
          <li>下架</li>
        </ul>
      </div>
      <div class="panel-body">
        <div class="cs">
          <div class="fg"><label>商品名称</label><div class="ctl"><div class="fc"><span>商品名称</span></div></div></div>
          <div class="fg"><label>标签</label><div class="ctl"><div class="fc sel">选择</div></div></div>
          <div class="fg"><label>商品库存</label><div class="ctl"><div class="range"><div><div class="fc"><span>商品库存</span></div></div><div class="dash">-</div><div><div class="fc"><span>商品库存</span></div></div></div></div></div>
          <div class="fg"><label>金币价格</label><div class="ctl"><div class="range"><div><div class="fc"><span>金币价格</span></div></div><div class="dash">-</div><div><div class="fc"><span>金币价格</span></div></div></div></div></div>
          <div class="fg"><label>状态</label><div class="ctl"><div class="fc sel">选择</div></div></div>
          <div class="fg"><label>创建时间</label><div class="ctl"><div class="fc"><span>创建时间</span></div></div></div>
          <div class="fg"><label></label><div class="ctl"><span class="btn btn-success">提交</span> <span class="btn btn-default">重置</span></div></div>
        </div>
        <div class="toolbar">
          <div class="l">
            <span class="btn btn-primary"><svg class="fa " viewBox="0 0 1536 1792" style="width:0.8571em;"><path transform="translate(0,1536) scale(1,-1)" d="M1511 480q0 -5 -1 -7q-64 -268 -268 -434.5t-478 -166.5q-146 0 -282.5 55t-243.5 157l-129 -129q-19 -19 -45 -19t-45 19t-19 45v448q0 26 19 45t45 19h448q26 0 45 -19t19 -45t-19 -45l-137 -137q71 -66 161 -102t187 -36q134 0 250 65t186 179q11 17 53 117
q8 23 30 23h192q13 0 22.5 -9.5t9.5 -22.5zM1536 1280v-448q0 -26 -19 -45t-45 -19h-448q-26 0 -45 19t-19 45t19 45l138 138q-148 137 -349 137q-134 0 -250 -65t-186 -179q-11 -17 -53 -117q-8 -23 -30 -23h-199q-13 0 -22.5 9.5t-9.5 22.5v7q65 268 270 434.5t480 166.5
q146 0 284 -55.5t245 -156.5l130 129q19 19 45 19t45 -19t19 -45z"/></svg></span>
            <span class="btn btn-success"><svg class="fa " viewBox="0 0 1408 1792" style="width:0.7857em;"><path transform="translate(0,1536) scale(1,-1)" d="M1408 800v-192q0 -40 -28 -68t-68 -28h-416v-416q0 -40 -28 -68t-68 -28h-192q-40 0 -68 28t-28 68v416h-416q-40 0 -68 28t-28 68v192q0 40 28 68t68 28h416v416q0 40 28 68t68 28h192q40 0 68 -28t28 -68v-416h416q40 0 68 -28t28 -68z"/></svg> 添加</span>
            <span class="btn btn-success dis"><svg class="fa " viewBox="0 0 1536 1792" style="width:0.8571em;"><path transform="translate(0,1536) scale(1,-1)" d="M363 0l91 91l-235 235l-91 -91v-107h128v-128h107zM886 928q0 22 -22 22q-10 0 -17 -7l-542 -542q-7 -7 -7 -17q0 -22 22 -22q10 0 17 7l542 542q7 7 7 17zM832 1120l416 -416l-832 -832h-416v416zM1515 1024q0 -53 -37 -90l-166 -166l-416 416l166 165q36 38 90 38
q53 0 91 -38l235 -234q37 -39 37 -91z"/></svg> 编辑</span>
            <span class="btn btn-danger dis"><svg class="fa " viewBox="0 0 1408 1792" style="width:0.7857em;"><path transform="translate(0,1536) scale(1,-1)" d="M512 160v704q0 14 -9 23t-23 9h-64q-14 0 -23 -9t-9 -23v-704q0 -14 9 -23t23 -9h64q14 0 23 9t9 23zM768 160v704q0 14 -9 23t-23 9h-64q-14 0 -23 -9t-9 -23v-704q0 -14 9 -23t23 -9h64q14 0 23 9t9 23zM1024 160v704q0 14 -9 23t-23 9h-64q-14 0 -23 -9t-9 -23v-704
q0 -14 9 -23t23 -9h64q14 0 23 9t9 23zM480 1152h448l-48 117q-7 9 -17 11h-317q-10 -2 -17 -11zM1408 1120v-64q0 -14 -9 -23t-23 -9h-96v-948q0 -83 -47 -143.5t-113 -60.5h-832q-66 0 -113 58.5t-47 141.5v952h-96q-14 0 -23 9t-9 23v64q0 14 9 23t23 9h309l70 167
q15 37 54 63t79 26h320q40 0 79 -26t54 -63l70 -167h309q14 0 23 -9t9 -23z"/></svg> 删除</span>
            <span class="btn btn-secondary"><svg class="fa " viewBox="0 0 1536 1792" style="width:0.8571em;"><path transform="translate(0,1536) scale(1,-1)" d="M1024 640q0 106 -75 181t-181 75t-181 -75t-75 -181t75 -181t181 -75t181 75t75 181zM1536 749v-222q0 -12 -8 -23t-20 -13l-185 -28q-19 -54 -39 -91q35 -50 107 -138q10 -12 10 -25t-9 -23q-27 -37 -99 -108t-94 -71q-12 0 -26 9l-138 108q-44 -23 -91 -38
q-16 -136 -29 -186q-7 -28 -36 -28h-222q-14 0 -24.5 8.5t-11.5 21.5l-28 184q-49 16 -90 37l-141 -107q-10 -9 -25 -9q-14 0 -25 11q-126 114 -165 168q-7 10 -7 23q0 12 8 23q15 21 51 66.5t54 70.5q-27 50 -41 99l-183 27q-13 2 -21 12.5t-8 23.5v222q0 12 8 23t19 13
l186 28q14 46 39 92q-40 57 -107 138q-10 12 -10 24q0 10 9 23q26 36 98.5 107.5t94.5 71.5q13 0 26 -10l138 -107q44 23 91 38q16 136 29 186q7 28 36 28h222q14 0 24.5 -8.5t11.5 -21.5l28 -184q49 -16 90 -37l142 107q9 9 24 9q13 0 25 -10q129 -119 165 -170q7 -8 7 -22
q0 -12 -8 -23q-15 -21 -51 -66.5t-54 -70.5q26 -50 41 -98l183 -28q13 -2 21 -12.5t8 -23.5z"/></svg> 更多</span>
          </div>
          <div class="r">
            <span class="btn btn-default exp"><svg viewBox="0 0 14.4 15.4"><path d="M0 11.3H14.4V15.4H0z M4.3 0.3H13.2V8.6L10.4 5.9L6 10.3L3.3 7.6L7.4 3.4z"/></svg><i></i></span>
            <span class="btn btn-default sr"><svg viewBox="0 0 15.8 15.4"><circle cx="6.6" cy="6.6" r="5.3" stroke-width="2"/><path d="M10.3 10.3L15 15" stroke-width="2.5" stroke-linecap="butt"/></svg></span>
          </div>
        </div>
        <table>
          <colgroup><col style="width:36px"><col style="width:225.6px"><col style="width:52.8px"><col style="width:84.8px"><col style="width:84.8px"><col style="width:84.8px"><col style="width:102.4px"><col style="width:61.8px"><col style="width:53.4px"><col style="width:169.6px"><col style="width:170.4px"><col style="width:79.2px"></colgroup>
          <thead><tr><th><i class="cb"></i></th><th>商品名称</th><th>标签</th><th>商品图片</th><th>商品库存</th><th>金币价格</th><th>人民币价格</th><th>运费</th><th>状态</th><th>创建时间</th><th>更新时间</th><th>操作</th></tr></thead>
          <tbody>
            <tr><td><i class="cb"></i></td><td>AirPods (第三代)</td><td style="color:#18bc9c">稀有</td><td><svg class="pimg" viewBox="0 0 38 37"><defs><linearGradient id="g1" x1="0" y1="0" x2="0" y2="1"><stop offset="0" stop-color="#f6f6f6"/><stop offset="1" stop-color="#dedede"/></linearGradient></defs><rect width="38" height="37" fill="#fff"/><rect x="7.2" y="12.5" width="23.8" height="21.5" rx="5" fill="url(#g1)"/><path d="M8.5 19.5h21" stroke="#d2d2d2" stroke-width="0.8"/><path d="M12 4.5l4.5 2.5l-1 7l-3 .5z" fill="#e9e9e9"/><path d="M26.5 4.5l-4.5 2.5l1 7l3 .5z" fill="#e9e9e9"/><ellipse cx="12.6" cy="5" rx="2" ry="1.6" fill="#2a2a2a"/><ellipse cx="25.6" cy="5" rx="2" ry="1.6" fill="#2a2a2a"/><circle cx="16.3" cy="8" r="1.2" fill="#555"/><circle cx="21.8" cy="8" r="1.2" fill="#555"/></svg></td><td>99</td><td>1399</td><td>1399</td><td>20.00</td><td>正常</td><td>2022-01-11 17:30:51</td><td>2022-01-11 17:30:51</td><td><span class="op" style="background:#18bc9c"><svg class="fa " viewBox="0 0 1536 1792" style="width:0.8571em;"><path transform="translate(0,1536) scale(1,-1)" d="M363 0l91 91l-235 235l-91 -91v-107h128v-128h107zM886 928q0 22 -22 22q-10 0 -17 -7l-542 -542q-7 -7 -7 -17q0 -22 22 -22q10 0 17 7l542 542q7 7 7 17zM832 1120l416 -416l-832 -832h-416v416zM1515 1024q0 -53 -37 -90l-166 -166l-416 416l166 165q36 38 90 38
q53 0 91 -38l235 -234q37 -39 37 -91z"/></svg></span> <span class="op" style="background:#e74c3c"><svg class="fa " viewBox="0 0 1408 1792" style="width:0.7857em;"><path transform="translate(0,1536) scale(1,-1)" d="M512 160v704q0 14 -9 23t-23 9h-64q-14 0 -23 -9t-9 -23v-704q0 -14 9 -23t23 -9h64q14 0 23 9t9 23zM768 160v704q0 14 -9 23t-23 9h-64q-14 0 -23 -9t-9 -23v-704q0 -14 9 -23t23 -9h64q14 0 23 9t9 23zM1024 160v704q0 14 -9 23t-23 9h-64q-14 0 -23 -9t-9 -23v-704
q0 -14 9 -23t23 -9h64q14 0 23 9t9 23zM480 1152h448l-48 117q-7 9 -17 11h-317q-10 -2 -17 -11zM1408 1120v-64q0 -14 -9 -23t-23 -9h-96v-948q0 -83 -47 -143.5t-113 -60.5h-832q-66 0 -113 58.5t-47 141.5v952h-96q-14 0 -23 9t-9 23v64q0 14 9 23t23 9h309l70 167
q15 37 54 63t79 26h320q40 0 79 -26t54 -63l70 -167h309q14 0 23 -9t9 -23z"/></svg></span></td></tr>
            <tr><td><i class="cb"></i></td><td>iPhone 13</td><td style="color:#e74c3c">至尊</td><td><svg class="pimg" viewBox="0 0 38 37"><defs><linearGradient id="g2" x1="0" y1="0" x2="1" y2="1"><stop offset="0" stop-color="#2f7cc0"/><stop offset="0.55" stop-color="#3a6fb0"/><stop offset="1" stop-color="#c06aa8"/></linearGradient></defs><rect x="7" y="6.5" width="17" height="27.4" rx="3" fill="#2d6d9c"/><rect x="22.3" y="6.5" width="9" height="27.4" rx="2.5" fill="#16304e"/><rect x="23.3" y="7.6" width="7.4" height="25.2" rx="2" fill="url(#g2)"/><rect x="8" y="7.5" width="6.8" height="6.8" rx="2" fill="#3f82b4"/><circle cx="10" cy="9.4" r="1.4" fill="#14263a"/><circle cx="12.8" cy="12.2" r="1.4" fill="#14263a"/><circle cx="15.8" cy="20" r="1.3" fill="#cfdde8"/></svg></td><td>99</td><td>6999</td><td>6999</td><td>20.00</td><td>正常</td><td>2022-01-11 17:30:30</td><td>2022-01-11 17:30:30</td><td><span class="op" style="background:#18bc9c"><svg class="fa " viewBox="0 0 1536 1792" style="width:0.8571em;"><path transform="translate(0,1536) scale(1,-1)" d="M363 0l91 91l-235 235l-91 -91v-107h128v-128h107zM886 928q0 22 -22 22q-10 0 -17 -7l-542 -542q-7 -7 -7 -17q0 -22 22 -22q10 0 17 7l542 542q7 7 7 17zM832 1120l416 -416l-832 -832h-416v416zM1515 1024q0 -53 -37 -90l-166 -166l-416 416l166 165q36 38 90 38
q53 0 91 -38l235 -234q37 -39 37 -91z"/></svg></span> <span class="op" style="background:#e74c3c"><svg class="fa " viewBox="0 0 1408 1792" style="width:0.7857em;"><path transform="translate(0,1536) scale(1,-1)" d="M512 160v704q0 14 -9 23t-23 9h-64q-14 0 -23 -9t-9 -23v-704q0 -14 9 -23t23 -9h64q14 0 23 9t9 23zM768 160v704q0 14 -9 23t-23 9h-64q-14 0 -23 -9t-9 -23v-704q0 -14 9 -23t23 -9h64q14 0 23 9t9 23zM1024 160v704q0 14 -9 23t-23 9h-64q-14 0 -23 -9t-9 -23v-704
q0 -14 9 -23t23 -9h64q14 0 23 9t9 23zM480 1152h448l-48 117q-7 9 -17 11h-317q-10 -2 -17 -11zM1408 1120v-64q0 -14 -9 -23t-23 -9h-96v-948q0 -83 -47 -143.5t-113 -60.5h-832q-66 0 -113 58.5t-47 141.5v952h-96q-14 0 -23 9t-9 23v64q0 14 9 23t23 9h309l70 167
q15 37 54 63t79 26h320q40 0 79 -26t54 -63l70 -167h309q14 0 23 -9t9 -23z"/></svg></span></td></tr>
            <tr><td><i class="cb"></i></td><td>FIIL T1 XS真无限耳机 (黑色)</td><td>普通</td><td><svg class="pimg" viewBox="0 0 38 37"><rect width="38" height="37" fill="#fff"/><rect x="8" y="21.5" width="23" height="13.2" rx="3.5" fill="#161616"/><path d="M8.5 25.5h22" stroke="#3a3a3a" stroke-width="0.7"/><path d="M8 11.5l3-1.2l2.5-3.5l5 2l-.5 5.5l-4 1.5l-2.5-2.5l-3 .6z" fill="#1c1c1c"/><path d="M20.5 3.5l5-1.5l.8-1.2l1.2 3l3.3.6l-.3 3.2l-5.5 3.2l-4-1.6z" fill="#1c1c1c"/></svg></td><td>99</td><td>199</td><td>199</td><td>0.00</td><td>正常</td><td>2022-01-11 17:30:13</td><td>2022-01-11 17:30:13</td><td><span class="op" style="background:#18bc9c"><svg class="fa " viewBox="0 0 1536 1792" style="width:0.8571em;"><path transform="translate(0,1536) scale(1,-1)" d="M363 0l91 91l-235 235l-91 -91v-107h128v-128h107zM886 928q0 22 -22 22q-10 0 -17 -7l-542 -542q-7 -7 -7 -17q0 -22 22 -22q10 0 17 7l542 542q7 7 7 17zM832 1120l416 -416l-832 -832h-416v416zM1515 1024q0 -53 -37 -90l-166 -166l-416 416l166 165q36 38 90 38
q53 0 91 -38l235 -234q37 -39 37 -91z"/></svg></span> <span class="op" style="background:#e74c3c"><svg class="fa " viewBox="0 0 1408 1792" style="width:0.7857em;"><path transform="translate(0,1536) scale(1,-1)" d="M512 160v704q0 14 -9 23t-23 9h-64q-14 0 -23 -9t-9 -23v-704q0 -14 9 -23t23 -9h64q14 0 23 9t9 23zM768 160v704q0 14 -9 23t-23 9h-64q-14 0 -23 -9t-9 -23v-704q0 -14 9 -23t23 -9h64q14 0 23 9t9 23zM1024 160v704q0 14 -9 23t-23 9h-64q-14 0 -23 -9t-9 -23v-704
q0 -14 9 -23t23 -9h64q14 0 23 9t9 23zM480 1152h448l-48 117q-7 9 -17 11h-317q-10 -2 -17 -11zM1408 1120v-64q0 -14 -9 -23t-23 -9h-96v-948q0 -83 -47 -143.5t-113 -60.5h-832q-66 0 -113 58.5t-47 141.5v952h-96q-14 0 -23 9t-9 23v64q0 14 9 23t23 9h309l70 167
q15 37 54 63t79 26h320q40 0 79 -26t54 -63l70 -167h309q14 0 23 -9t9 -23z"/></svg></span></td></tr>
          </tbody>
        </table>
        <div class="tinfo">显示第 1 到第 3 条记录，总共 3 条记录</div>
      </div>
    </div>
  </div>
</div>
<div id="edge"></div>
<div id="tbline"></div>
<div id="taskbar"><i style="left:91px;width:58px;background:#e6e2f2"></i><i style="left:161px;width:66px"></i><i style="left:231px;width:66px"></i><i style="left:301px;width:66px"></i><i style="left:650px;width:68px;background:#fcf8cc"></i><i style="left:721px;width:66px"></i><i style="left:791px;width:66px"></i><i style="left:930px;width:67px"></i></div>
<div id="widget"></div>

</body>
</html>
